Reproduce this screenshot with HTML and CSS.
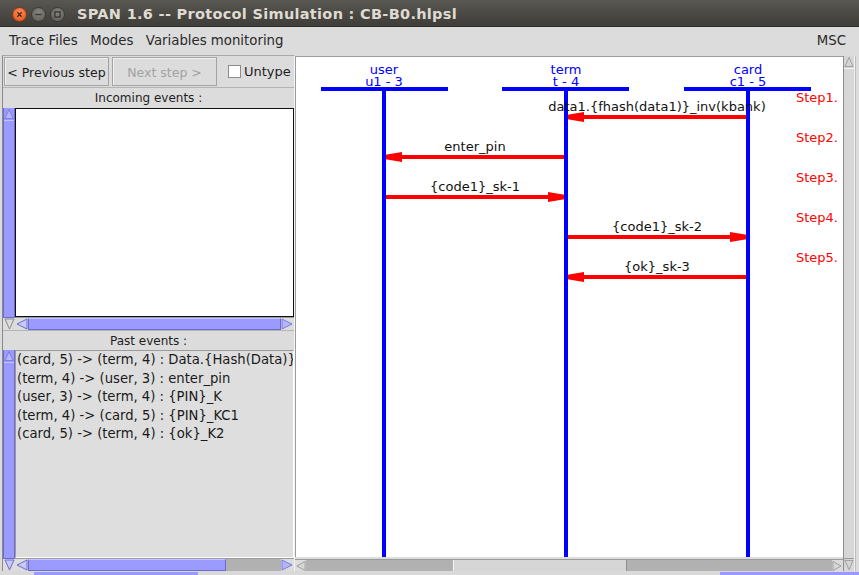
FILE: index.html
```html
<!DOCTYPE html>
<html>
<head>
<meta charset="utf-8">
<title>SPAN 1.6 -- Protocol Simulation : CB-B0.hlpsl</title>
<link rel="stylesheet" href="styles.css">
</head>
<body>
<div class="window">
  <header class="titlebar">
    <div class="winbtns">
      <span class="wbtn close"><svg viewBox="0 0 15 15" width="15" height="15"><path d="M5 5l5 5M10 5l-5 5"/></svg></span>
      <span class="wbtn"><svg viewBox="0 0 15 15" width="15" height="15"><path d="M4 7.5h7"/></svg></span>
      <span class="wbtn"><svg viewBox="0 0 15 15" width="15" height="15"><rect x="4.5" y="4.5" width="6" height="6"/></svg></span>
    </div>
    <div class="title">SPAN 1.6 -- Protocol Simulation : CB-B0.hlpsl</div>
  </header>

  <nav class="menubar">
    <span class="menu">Trace Files</span>
    <span class="menu">Modes</span>
    <span class="menu">Variables monitoring</span>
    <span class="menu msc">MSC</span>
  </nav>

  <div class="main">
    <aside class="left">
      <div class="left-inner">
        <div class="toolbar">
          <div class="btn">&lt; Previous step</div>
          <div class="btn disabled">Next step &gt;</div>
          <div class="check"><span class="box"></span><span>Untype</span></div>
        </div>

        <div class="caption">Incoming events :</div>
        <div class="pane">
          <div class="vbar purple">
            <span class="arr"><svg viewBox="0 0 11 12" width="11" height="12"><path class="tri-light" d="M5.5 1L10 11H1z"/></svg></span>
            <span class="vthumb"></span>
            <span class="arr"><svg viewBox="0 0 11 12" width="11" height="12"><path class="tri-outline" d="M1 1h9L5.5 11z"/></svg></span>
          </div>
          <div class="list incoming"></div>
          <div class="hbar">
            <span class="harr"><svg viewBox="0 0 13 12" width="13" height="12"><path class="tri-outline-p" d="M2 6L12 1v10z"/></svg></span>
            <span class="hthumb purple-thumb grow"></span>
            <span class="harr"><svg viewBox="0 0 13 12" width="13" height="12"><path class="tri-light" d="M11 6L1 1v10z"/></svg></span>
          </div>
        </div>

        <div class="caption">Past events :</div>
        <div class="pane">
          <div class="vbar purple">
            <span class="arr"><svg viewBox="0 0 11 12" width="11" height="12"><path class="tri-light" d="M5.5 1L10 11H1z"/></svg></span>
            <span class="vthumb"></span>
            <span class="arr"><svg viewBox="0 0 11 12" width="11" height="12"><path class="tri-outline-p" d="M1 1h9L5.5 11z"/></svg></span>
          </div>
          <div class="list past">
            <div class="item">(card, 5) -&gt; (term, 4) : Data.{Hash(Data)}_inv(KB)</div>
            <div class="item">(term, 4) -&gt; (user, 3) : enter_pin</div>
            <div class="item">(user, 3) -&gt; (term, 4) : {PIN}_K</div>
            <div class="item">(term, 4) -&gt; (card, 5) : {PIN}_KC1</div>
            <div class="item">(card, 5) -&gt; (term, 4) : {ok}_K2</div>
          </div>
          <div class="hbar">
            <span class="harr"><svg viewBox="0 0 13 12" width="13" height="12"><path class="tri-outline-p" d="M2 6L12 1v10z"/></svg></span>
            <span class="hthumb purple-thumb past-thumb"></span>
            <span class="htrack grow"></span>
            <span class="harr"><svg viewBox="0 0 13 12" width="13" height="12"><path class="tri-light" d="M11 6L1 1v10z"/></svg></span>
          </div>
        </div>
      </div>
    </aside>

    <section class="right">
      <div class="canvas">
        <svg class="msc" width="547" height="500" viewBox="0 0 547 500">
          <g class="arrow">
            <line x1="452" y1="60" x2="272" y2="60"/>
            <polygon points="270,58 288,55 288,65 270,62"/>
            <line x1="270" y1="100" x2="90" y2="100"/>
            <polygon points="88,98 106,95 106,105 88,102"/>
            <line x1="88" y1="140" x2="268" y2="140"/>
            <polygon points="270,138 252,135 252,145 270,142"/>
            <line x1="270" y1="180" x2="450" y2="180"/>
            <polygon points="452,178 434,175 434,185 452,182"/>
            <line x1="452" y1="220" x2="272" y2="220"/>
            <polygon points="270,218 288,215 288,225 270,222"/>
          </g>
          <g class="life">
            <line x1="25" y1="32" x2="152" y2="32"/>
            <line x1="206" y1="32" x2="333" y2="32"/>
            <line x1="388" y1="32" x2="515" y2="32"/>
            <line x1="88" y1="30" x2="88" y2="500"/>
            <line x1="270" y1="30" x2="270" y2="500"/>
            <line x1="452" y1="30" x2="452" y2="500"/>
          </g>
          <g class="agent">
            <text x="88" y="16.5">user</text>
            <text x="88" y="29">u1 - 3</text>
            <text x="270" y="16.5">term</text>
            <text x="270" y="29">t - 4</text>
            <text x="452" y="16.5">card</text>
            <text x="452" y="29">c1 - 5</text>
          </g>
          <g class="msg">
            <text x="361" y="53.5">data1.{fhash(data1)}_inv(kbank)</text>
            <text x="179" y="93.5">enter_pin</text>
            <text x="179" y="133.5">{code1}_sk-1</text>
            <text x="361" y="173.5">{code1}_sk-2</text>
            <text x="361" y="213.5">{ok}_sk-3</text>
          </g>
          <g class="step">
            <text x="500" y="45">Step1.</text>
            <text x="500" y="85">Step2.</text>
            <text x="500" y="125">Step3.</text>
            <text x="500" y="165">Step4.</text>
            <text x="500" y="205">Step5.</text>
          </g>
        </svg>
      </div>
      <div class="rvbar">
        <span class="arr"><svg viewBox="0 0 11 12" width="11" height="12"><path class="tri-gray" d="M5.5 1L10 11H1z"/></svg></span>
        <span class="rvthumb"></span>
        <span class="arr"><svg viewBox="0 0 11 12" width="11" height="12"><path class="tri-gray" d="M1 1h9L5.5 11z"/></svg></span>
      </div>
      <div class="redge"></div>
      <div class="rhbar">
        <span class="harr"><svg viewBox="0 0 12 12" width="12" height="12"><path class="tri-gray" d="M2 6L11 1v10z"/></svg></span>
        <span class="htrack track-a"></span>
        <span class="gthumb"></span>
        <span class="htrack grow"></span>
        <span class="harr"><svg viewBox="0 0 12 12" width="12" height="12"><path class="tri-gray" d="M10 6L1 1v10z"/></svg></span>
      </div>
    </section>
  </div>

  <div class="bottomstrip">
    <span class="seg-gap1"></span>
    <span class="seg-purple seg-p1"></span>
    <span class="seg-gap2"></span>
    <span class="seg-purple grow"></span>
  </div>
</div>
</body>
</html>
```

FILE: styles.css
```css
* { box-sizing: border-box; }
html, body { margin: 0; padding: 0; }
body {
  width: 859px;
  height: 575px;
  overflow: hidden;
  background: #dcdcdc;
  font-family: "DejaVu Sans", sans-serif;
  color: #222;
}
.window { width: 859px; height: 575px; display: flex; flex-direction: column; }

/* title bar */
.titlebar {
  height: 27px;
  flex: none;
  display: flex;
  align-items: center;
  background: linear-gradient(#595751, #3e3d39);
  border-bottom: 1px solid #2f2e2b;
}
.winbtns { display: flex; gap: 4px; padding-left: 12px; padding-top: 2px; }
.wbtn {
  width: 15px; height: 15px; border-radius: 50%;
  background: radial-gradient(circle at 50% 35%, #86847e, #5d5b56);
  border: 1px solid #3a3935;
  display: flex; align-items: center; justify-content: center;
}
.wbtn svg { display: block; }
.wbtn path, .wbtn rect { stroke: #3a3935; stroke-width: 1.6; fill: none; }
.wbtn.close { background: radial-gradient(circle at 50% 35%, #f7915f, #e04e16); border-color: #8e3510; }
.wbtn.close path { stroke: #5a2208; }
.title {
  margin-left: 12px;
  padding-top: 2px;
  font-family: "DejaVu Sans", sans-serif;
  font-weight: bold;
  font-size: 14.5px;
  letter-spacing: 0.3px;
  color: #dfdbd2;
  white-space: nowrap;
}

/* menu bar */
.menubar {
  height: 28px;
  flex: none;
  display: flex;
  align-items: center;
  gap: 12.5px;
  padding: 0 13px 1px 9px;
  background: #dcdcdc;
  font-size: 13.3px;
  color: #2a2a2a;
}
.menu.msc { margin-left: auto; }

/* main */
.main { flex: none; height: 516px; display: flex; }
.left { width: 295px; flex: none; padding-left: 2px; }
.left-inner {
  height: 100%;
  border-left: 1px solid #8a8a8a;
  border-right: 1px solid #f4f4f4;
  border-top: 1px solid #a8a8a8;
  display: flex; flex-direction: column;
}

.toolbar {
  height: 31px; flex: none;
  display: flex; align-items: center;
  padding-left: 1px; gap: 3px;
}
.btn {
  width: 105px; height: 29px;
  border: 1px solid #a3a3a3;
  box-shadow: inset 1px 1px 0 #f2f2f2;
  background: #dcdcdc;
  display: flex; align-items: center; justify-content: center;
  font-size: 12.5px; color: #1e1e1e;
  white-space: nowrap; overflow: hidden;
  padding-top: 1px;
}
.btn.disabled { color: #a2a2a2; }
.check { display: flex; align-items: center; gap: 3px; margin-left: 8px; font-size: 13px; color: #1e1e1e; }
.box { width: 13px; height: 13px; background: #fff; border: 1px solid #8c8c8c; }

.caption {
  height: 21px; flex: none;
  border-top: 1px solid #b4b4b4;
  display: flex; align-items: center; justify-content: center;
  font-size: 12px; color: #1e1e1e;
}

.pane {
  flex: none;
  height: 222px;
  display: grid;
  grid-template-columns: 12px 1fr;
  grid-template-rows: 1fr 13px;
}
.pane + .caption { height: 20px; }
.pane:last-child { height: 221px; }

.vbar {
  grid-row: 1 / 3;
  display: flex; flex-direction: column;
  background: #9999ff;
  border-left: 1px solid #6b6bcc;
  border-right: 1px solid #6b6bcc;
}
.vbar .arr, .rvbar .arr { height: 12px; flex: none; display: flex; justify-content: center; align-items: center; }
.vthumb { flex: 1; background: #9a9aff; border-top: 1px solid #c4c4ff; border-bottom: 1px solid #6b6bcc; }
.vbar .arr:last-child { background: #dcdcdc; margin: 0 -1px; }

.tri-light { fill: #b6b6ff; stroke: #7a7ae0; stroke-width: 1; }
.tri-outline { fill: #dcdcdc; stroke: #8a8a8a; stroke-width: 1; }
.tri-outline-p { fill: #c8c8ff; stroke: #6b6bcc; stroke-width: 1; }
.tri-gray { fill: #d6d6d6; stroke: #9a9a9a; stroke-width: 1; }

.list { grid-column: 2; grid-row: 1; }
.list.incoming { background: #fff; border: 1px solid #111; }
.list.past {
  background: #dedede;
  border-left: 1px solid #9c9c9c;
  border-top: 1px solid #9c9c9c;
  border-right: 1px solid #fff;
  border-bottom: 1px solid #fff;
  overflow: hidden;
  padding-left: 1px;
}
.item { font-size: 13.2px; line-height: 18.5px; white-space: nowrap; color: #1a1a1a; }

.hbar {
  grid-column: 2; grid-row: 2;
  display: flex;
  background: #b1b1b1;
  border-top: 1px solid #9a9a9a;
}
.harr { width: 13px; flex: none; display: flex; align-items: center; justify-content: center; background: #dcdcdc; }
.hthumb { flex: none; }
.purple-thumb { background: #9a9aff; border: 1px solid #6b6bcc; border-top-color: #c4c4ff; }
.past-thumb { width: 198px; }
.htrack { background: #b1b1b1; }
.grow { flex: 1; }

/* right */
.right {
  flex: 1;
  display: grid;
  grid-template-columns: 1fr 12px 4px;
  grid-template-rows: 503px 12px;
  padding-top: 1px;
}
.canvas {
  grid-column: 1; grid-row: 1;
  height: 501px;
  background: #fff;
  border-top: 1px solid #9c9c9c;
  border-left: 1px solid #9c9c9c;
  overflow: hidden;
}
.msc { display: block; }
.arrow line { stroke: #ff0000; stroke-width: 4; }
.arrow polygon { fill: #ff0000; }
.life line { stroke: #0000ff; stroke-width: 4; }
.agent text { fill: #0000ff; font-family: "DejaVu Sans", sans-serif; font-size: 13px; text-anchor: middle; }
.msg text { fill: #111; font-family: "DejaVu Sans", sans-serif; font-size: 13px; text-anchor: middle; }
.step text { fill: #ff0000; font-family: "DejaVu Sans", sans-serif; font-size: 13px; }

.rvbar {
  grid-column: 2; grid-row: 1 / 3;
  display: flex; flex-direction: column;
  background: #d6d6d6;
  border-left: 1px solid #8e8e8e;
  border-right: 1px solid #f2f2f2;
}
.rvthumb { flex: 1; border-top: 1px solid #f4f4f4; border-bottom: 1px solid #9a9a9a; }
.redge { grid-column: 3; grid-row: 1 / 3; border-left: 1px solid #bcbcbc; }
.rhbar {
  grid-column: 1; grid-row: 2;
  display: flex;
  background: #b1b1b1;
  border-top: 1px solid #9a9a9a;
}
.rhbar .harr { width: 11px; }
.track-a { width: 147px; flex: none; }
.gthumb { width: 174px; flex: none; background: #d6d6d6; border-left: 1px solid #f4f4f4; border-right: 1px solid #8e8e8e; }

/* bottom strip */
.bottomstrip { flex: 1; display: flex; align-items: flex-end; background: #d9d9d9; }
.seg-gap1 { width: 34px; }
.seg-p1 { width: 164px; }
.seg-gap2 { width: 522px; }
.seg-purple { height: 3px; background: #9999ff; }
```
